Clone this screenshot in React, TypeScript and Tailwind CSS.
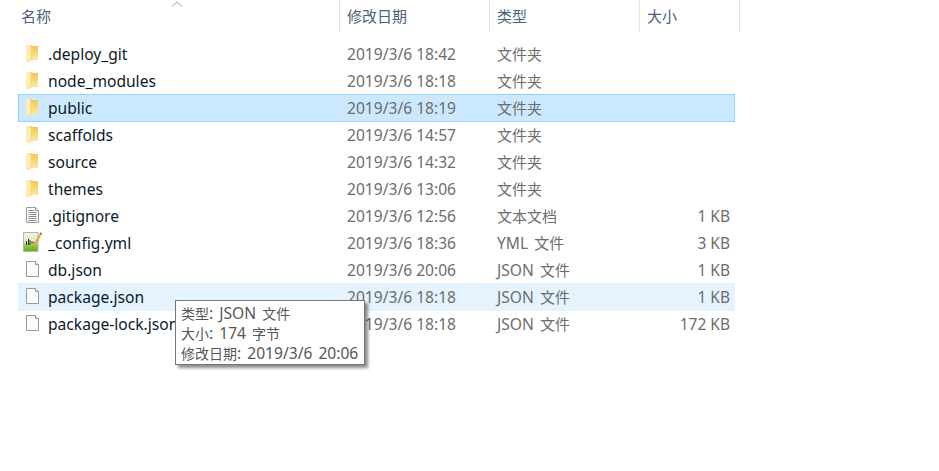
import React from 'react';

type IconKind = 'folder' | 'text' | 'yml' | 'file';

interface FileRow {
  name: string;
  date: string;
  type: string;
  size?: string;
  icon: IconKind;
  state?: 'selected' | 'hover';
}

const rows: FileRow[] = [
  { name: '.deploy_git', date: '2019/3/6 18:42', type: '文件夹', icon: 'folder' },
  { name: 'node_modules', date: '2019/3/6 18:18', type: '文件夹', icon: 'folder' },
  { name: 'public', date: '2019/3/6 18:19', type: '文件夹', icon: 'folder', state: 'selected' },
  { name: 'scaffolds', date: '2019/3/6 14:57', type: '文件夹', icon: 'folder' },
  { name: 'source', date: '2019/3/6 14:32', type: '文件夹', icon: 'folder' },
  { name: 'themes', date: '2019/3/6 13:06', type: '文件夹', icon: 'folder' },
  { name: '.gitignore', date: '2019/3/6 12:56', type: '文本文档', size: '1 KB', icon: 'text' },
  { name: '_config.yml', date: '2019/3/6 18:36', type: 'YML 文件', size: '3 KB', icon: 'yml' },
  { name: 'db.json', date: '2019/3/6 20:06', type: 'JSON 文件', size: '1 KB', icon: 'file' },
  { name: 'package.json', date: '2019/3/6 18:18', type: 'JSON 文件', size: '1 KB', icon: 'file', state: 'hover' },
  { name: 'package-lock.json', date: '2019/3/6 18:18', type: 'JSON 文件', size: '172 KB', icon: 'file' },
];

// the latin glyphs in the reference run wider than the CJK ones, so they get their own size
const Latin = ({ children }: { children: React.ReactNode }) => <span className="text-[15.6px]">{children}</span>;

const FolderIcon = ({ id }: { id: string }) => (
  <svg width="16" height="18" viewBox="0 0 16 18" className="block">
    <defs>
      <linearGradient id={id} x1="0" y1="0" x2="0" y2="1">
        <stop offset="0" stopColor="#f3c648" />
        <stop offset="1" stopColor="#fde7a2" />
      </linearGradient>
    </defs>
    <path d="M2 0h5l1 1h6v14H2z" fill={`url(#${id})`} />
    <path d="M2 0h3.5L7 2v13.2L3.5 17H2.6L2 16z" fill="#fdedb4" />
    <path d="M7 2v13.2L3.5 17" fill="none" stroke="#f0cf72" strokeWidth="0.7" />
  </svg>
);

const PageIcon = ({ lines }: { lines?: boolean }) => (
  <svg width="16" height="18" viewBox="0 0 16 18" className="mb-[2px] block">
    <path d="M2.5 1.5h9l3 3v12h-12z" fill="#fbfbfb" stroke="#9a9a9a" />
    <path d="M11.5 1.5v3h3" fill="#eeeeee" stroke="#9a9a9a" />
    {lines && (
      <path d="M4.5 4.5h6M4.5 6.5h8M4.5 8.5h8M4.5 10.5h8M4.5 12.5h8M4.5 14.5h8" stroke="#8c8c8c" strokeWidth="1" />
    )}
  </svg>
);

const YmlIcon = () => (
  <svg width="20" height="20" viewBox="0 0 20 20" className="mb-[2px] block">
    <defs>
      <linearGradient id="yml-body" x1="0" y1="0" x2="0" y2="1">
        <stop offset="0" stopColor="#f2f2ec" />
        <stop offset="0.45" stopColor="#dcebc0" />
        <stop offset="0.7" stopColor="#8ccb3e" />
        <stop offset="1" stopColor="#5cab2e" />
      </linearGradient>
    </defs>
    <path d="M0.5 0.5h14.5v19H0.5z" fill="url(#yml-body)" stroke="#b5b5b0" />
    <path d="M3.5 9v4M5.5 7v6M7 8v5M9 9.5v2M10.5 10v1" stroke="#333333" strokeWidth="1" />
    <path d="M18.5 2L12 14l-1.5 2 .3-3L17 1.2z" fill="#f2b632" stroke="#c98a1d" strokeWidth="0.5" />
    <path d="M17.4 0.4l1.8 1-.7 1.2-1.7-1z" fill="#c0392b" />
  </svg>
);

const RowIcon = ({ row }: { row: FileRow }) => {
  if (row.icon === 'folder') return <FolderIcon id={`folder-${row.name}`} />;
  if (row.icon === 'yml') return <YmlIcon />;
  return <PageIcon lines={row.icon === 'text'} />;
};

const Row = ({ row }: { row: FileRow }) => {
  let bg = 'border border-transparent';
  if (row.state === 'selected') bg = 'border border-[#99d1ff] bg-[#cce8ff]';
  if (row.state === 'hover') bg = 'border border-[#e5f3ff] bg-[#e5f3ff]';
  const typeParts = row.type.split(' ');

  return (
    <div className={`ml-[18px] mb-[-1px] flex h-[28px] w-[717px] items-center leading-[20px] ${bg}`}>
      <div className="flex w-[320px] items-center">
        <div className={`flex w-[29px] justify-start ${row.icon === 'yml' ? 'pl-[4px]' : 'pl-[5px]'}`}>
          <RowIcon row={row} />
        </div>
        <span className="text-[15.6px] text-[#0b1a2b]">{row.name}</span>
      </div>
      <div className="w-[150px] pl-[8px] text-[15.6px] text-[#6d6d6d]">{row.date}</div>
      <div className="h-[20px] w-[150px] pl-[8px] text-[15px] text-[#6d6d6d]">
        {typeParts.length > 1 ? (
          <>
            <span className="mr-[2px]">
              <Latin>{typeParts[0]} </Latin>
            </span>
            {typeParts[1]}
          </>
        ) : (
          row.type
        )}
      </div>
      <div className="w-[95px] pr-[4px] text-right text-[15.5px] text-[#6d6d6d]">{row.size}</div>
    </div>
  );
};

const HeaderCell = ({ label, className }: { label: string; className: string }) => (
  <div className={`flex h-[32px] items-center border-r border-[#e5e5e5] pl-[7px] text-[15px] text-[#4c607a] ${className}`}>
    {label}
  </div>
);

const App: React.FC = () => {
  return (
    <div
      className="relative h-[471px] w-[939px] overflow-hidden bg-white"
      style={{ fontFamily: '"Noto Sans", "Noto Sans CJK SC", sans-serif' }}
    >
      <div className="ml-[14px] flex">
        <HeaderCell label="名称" className="w-[326px]" />
        <HeaderCell label="修改日期" className="w-[150px]" />
        <HeaderCell label="类型" className="w-[150px]" />
        <HeaderCell label="大小" className="w-[100px]" />
      </div>
      <svg width="12" height="6" viewBox="0 0 12 6" className="absolute left-[171px] top-[1px]">
        <path d="M1 5.5L6 1l5 4.5" fill="none" stroke="#9aa0a6" strokeWidth="1" />
      </svg>
      <div className="pt-[8px]">
        {rows.map(row => (
          <Row key={row.name} row={row} />
        ))}
      </div>
      <div className="absolute left-[175px] top-[300px] h-[65px] w-[190px] border border-[#767676] bg-white pl-[5px] pt-[2px] text-[14px] leading-[20px] text-[#575757] [word-spacing:2px] shadow-[3px_3px_3px_rgba(0,0,0,0.45)]">
        <div className="h-[20px]">
          类型<Latin>: JSON </Latin>文件
        </div>
        <div className="h-[20px]">
          大小<Latin>: 174 </Latin>字节
        </div>
        <div className="h-[20px]">
          修改日期<Latin>: 2019/3/6 20:06</Latin>
        </div>
      </div>
    </div>
  );
};

export default App;
